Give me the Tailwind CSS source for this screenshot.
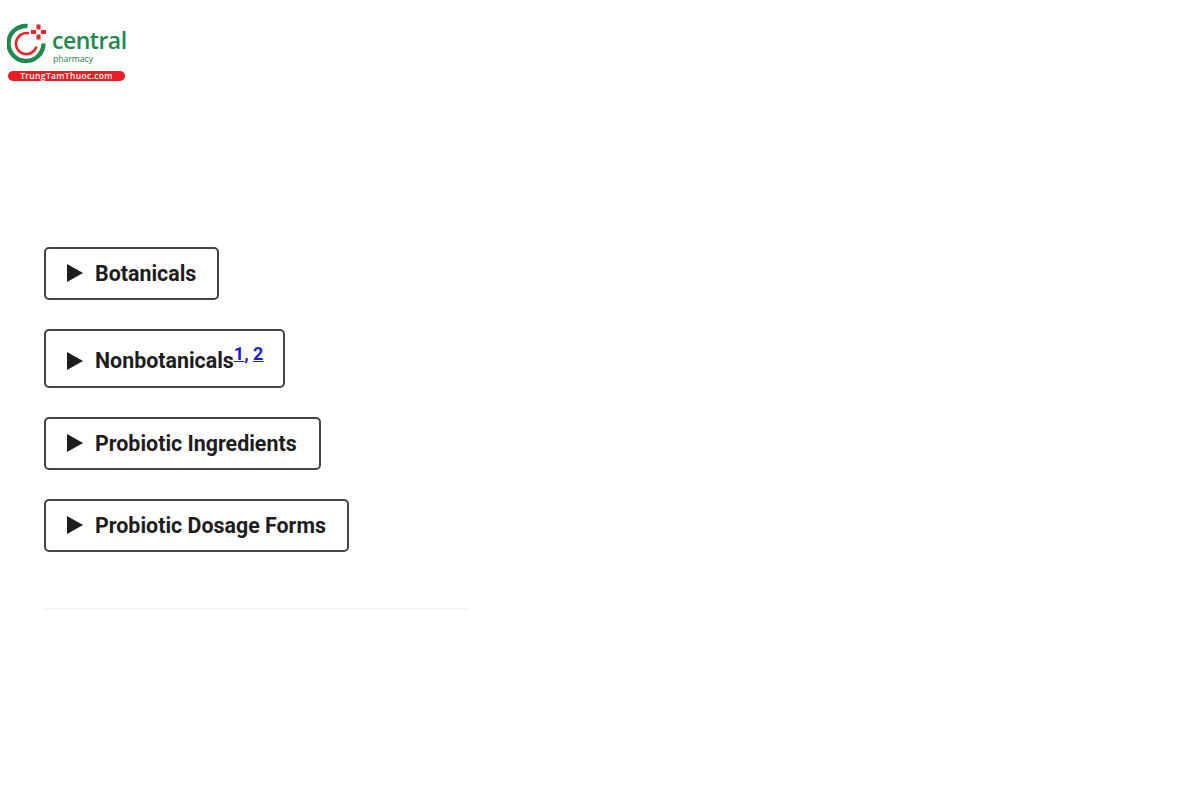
<!DOCTYPE html>
<html>
<head>
<meta charset="utf-8">
<script src="https://cdn.jsdelivr.net/npm/@tailwindcss/browser@4"></script>
</head>
<body class="bg-white font-['Roboto',sans-serif]">
<div class="w-[1200px] h-[800px] overflow-hidden">
  <header class="pl-[7px] pt-[22px] h-[247px]">
    <div class="relative w-[120px] h-[60px]">
      <svg class="absolute left-0 top-0" width="42" height="42" viewBox="0 0 42 42" fill="none">
        <path d="M20.5 4 A17.5 17.5 0 1 0 36.5 21.5" stroke="#1f8a4c" stroke-width="4.4"/>
        <path d="M22 11.4 A10.5 10.5 0 1 0 29.5 24.5" stroke="#e8262d" stroke-width="2.6"/>
        <path d="M29.5 2.5h4v5h-4zM24 8h5v4h-5zM34 8h5v4h-5zM29.5 12.5h4v5h-4z" fill="#e8262d"/>
      </svg>
      <div class="absolute left-[45px] top-[7px] text-[23px] leading-[22px] font-semibold tracking-[-0.5px] text-[#1f8a4c] font-['Open_Sans',sans-serif]">central</div>
      <div class="absolute left-[46px] top-[31px] text-[8.6px] leading-[12px] text-[#1f7f4a] font-['Open_Sans',sans-serif]">pharmacy</div>
      <div class="absolute left-[1px] top-[49px] w-[117px] h-[10px] rounded-full bg-[#ec1c24] text-white text-[8.5px] leading-[10px] font-semibold tracking-[0.35px] text-center font-['Open_Sans',sans-serif]">TrungTamThuoc.com</div>
    </div>
  </header>
  <main class="pl-[44px] flex flex-col items-start gap-[29px] text-[21.4px] font-bold text-[#1d1d1d]">
    <div class="h-[53px] border-2 border-[#444] rounded-[5px] pl-[21px] pr-[21px] flex items-center gap-[12px]">
      <svg width="16" height="18" viewBox="0 0 16 18" class="shrink-0 -mt-[1px]"><path d="M0 0 16 9 0 18z" fill="#1d1d1d"/></svg>
      <span class="mt-[1px]">Botanicals</span>
    </div>
    <div class="h-[59px] border-2 border-[#444] rounded-[5px] pl-[21px] pr-[20px] flex items-center gap-[12px]">
      <svg width="16" height="18" viewBox="0 0 16 18" class="shrink-0 mt-[4px]"><path d="M0 0 16 9 0 18z" fill="#1d1d1d"/></svg>
      <span class="mt-[5px]">Nonbotanicals<sup class="text-[18px] -top-[8px]"><a class="text-[#1a1ad6] underline">1</a><span class="text-[#1a1ad6]">,</span> <a class="text-[#1a1ad6] underline">2</a></sup></span>
    </div>
    <div class="h-[53px] border-2 border-[#444] rounded-[5px] pl-[21px] pr-[22px] flex items-center gap-[12px]">
      <svg width="16" height="18" viewBox="0 0 16 18" class="shrink-0 -mt-[1px]"><path d="M0 0 16 9 0 18z" fill="#1d1d1d"/></svg>
      <span class="mt-[1px]">Probiotic Ingredients</span>
    </div>
    <div class="h-[53px] border-2 border-[#444] rounded-[5px] pl-[21px] pr-[21px] flex items-center gap-[12px]">
      <svg width="16" height="18" viewBox="0 0 16 18" class="shrink-0 -mt-[1px]"><path d="M0 0 16 9 0 18z" fill="#1d1d1d"/></svg>
      <span class="mt-[1px]">Probiotic Dosage Forms</span>
    </div>
  </main>
  <hr class="ml-[44px] mt-[56px] w-[424px] border-t border-[#f0f0f0]">
</div>
</body>
</html>
